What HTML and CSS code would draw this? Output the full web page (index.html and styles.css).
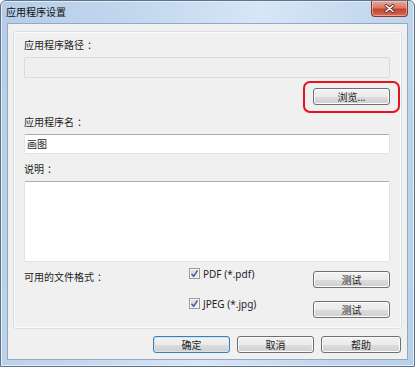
FILE: index.html
```html
<!DOCTYPE html>
<html lang="zh-CN">
<head>
    <meta charset="UTF-8">
    <meta name="viewport" content="width=device-width, initial-scale=1.0">
    <title>应用程序设置</title>
    <link rel="stylesheet" href="styles.css">
</head>
<body>
    <div class="window">
        <div class="titlebar">
            <span class="title">应用程序设置</span>
            <button class="close" type="button">
                <svg width="11" height="9" viewBox="0 0 11 9">
                    <path d="M2 1.5 L9 7.5 M9 1.5 L2 7.5" stroke="#5a2a22" stroke-width="3" stroke-linecap="round"/>
                    <path d="M2 1.5 L9 7.5 M9 1.5 L2 7.5" stroke="#ffffff" stroke-width="1.6" stroke-linecap="round"/>
                </svg>
            </button>
        </div>
        <div class="client">
            <div class="group">
                <div class="label">应用程序路径<span class="colon">：</span></div>
                <div class="path-box"></div>
                <div class="browse-row">
                    <div class="browse-wrap">
                        <button class="btn" type="button">浏览...</button>
                    </div>
                </div>
                <div class="label label-gap">应用程序名<span class="colon">：</span></div>
                <div class="textbox">画图</div>
                <div class="label label-gap2">说明<span class="colon">：</span></div>
                <div class="textarea"></div>
                <div class="formats">
                    <div class="label">可用的文件格式<span class="colon">：</span></div>
                    <label class="check"><span class="box"><svg width="9" height="9" viewBox="0 0 9 9"><path d="M1.5 4.8 L3.6 7.2 L7.6 1.4" fill="none" stroke="#3f5f9c" stroke-width="1.5"/></svg></span>PDF (*.pdf)</label>
                    <button class="btn" type="button">测试</button>
                    <div></div>
                    <label class="check"><span class="box"><svg width="9" height="9" viewBox="0 0 9 9"><path d="M1.5 4.8 L3.6 7.2 L7.6 1.4" fill="none" stroke="#3f5f9c" stroke-width="1.5"/></svg></span>JPEG (*.jpg)</label>
                    <button class="btn" type="button">测试</button>
                </div>
            </div>
            <div class="actions">
                <button class="btn btn-default" type="button">确定</button>
                <button class="btn" type="button">取消</button>
                <button class="btn btn-wide" type="button">帮助</button>
            </div>
        </div>
    </div>
</body>
</html>
```

FILE: styles.css
```css
body {
    margin: 0;
    background: #ffffff;
    font-family: "Noto Sans", "Noto Sans CJK SC", sans-serif;
    font-size: 10px;
    color: #1e1e1e;
}

.window {
    width: 415px;
    height: 367px;
    box-sizing: border-box;
    border: 1px solid #5f7389;
    border-radius: 6px 6px 0 0;
    background: linear-gradient(100deg, #b6cde7 0%, #c3d8ef 30%, #d6e6f6 55%, #c2d7ee 80%, #b9d0ea 100%);
    box-shadow: inset 0 0 0 1px #e3edf8;
}

.titlebar {
    height: 22px;
    display: flex;
    justify-content: space-between;
    padding: 0 6px 0 5px;
}

.title {
    line-height: 23px;
    color: #101010;
}

.close {
    width: 37px;
    height: 16px;
    padding: 0;
    border: 1px solid #80392d;
    border-top: none;
    border-radius: 0 0 4px 4px;
    background: linear-gradient(to bottom, #e9a99b 0%, #d77a68 45%, #c4432e 55%, #d66a52 100%);
    box-shadow: inset 0 0 0 1px rgba(255, 220, 210, 0.5);
    display: flex;
    align-items: center;
    justify-content: center;
}

.client {
    margin: 0 6px 6px 6px;
    height: 337px;
    box-sizing: border-box;
    border: 1px solid #93a8c2;
    background: #f0f0f0;
    padding: 7px 5px 0 5px;
}

.group {
    border: 1px solid #d9dfe4;
    border-radius: 3px;
    box-shadow: inset 0 0 0 1px #fbfbfb;
    padding: 6px 11px 10px 10px;
}

.label {
    line-height: 14px;
    height: 14px;
    white-space: nowrap;
}

.colon {
    padding-left: 3px;
}

.path-box {
    margin-top: 5px;
    height: 21px;
    box-sizing: border-box;
    border: 1px solid #dadada;
    border-radius: 2px;
    background: #efefef;
}

.browse-row {
    margin-top: 10px;
    display: flex;
    justify-content: flex-end;
}

.browse-wrap {
    position: relative;
}

.browse-wrap::after {
    content: "";
    position: absolute;
    top: -7px;
    bottom: -8px;
    left: -10px;
    right: -10px;
    border: 2px solid #e8121a;
    border-radius: 7px;
}

.btn {
    width: 77px;
    height: 17px;
    padding: 0;
    font-family: "Noto Sans", "Noto Sans CJK SC", sans-serif;
    font-size: 10px;
    line-height: 14px;
    color: #1e1e1e;
    border: 1px solid #707070;
    border-radius: 3px;
    background: linear-gradient(to bottom, #f2f2f2 0%, #ebebeb 50%, #dddddd 51%, #cfcfcf 100%);
    box-shadow: inset 0 0 0 1px #fcfcfc;
}

.label-gap {
    margin-top: 10px;
}

.label-gap2 {
    margin-top: 8px;
}

.textbox {
    margin-top: 5px;
    height: 20px;
    box-sizing: border-box;
    border: 1px solid #e2e3ea;
    border-top-color: #abadb3;
    border-radius: 2px;
    background: #ffffff;
    padding-left: 2px;
    line-height: 18px;
}

.textarea {
    margin-top: 5px;
    height: 81px;
    box-sizing: border-box;
    border: 1px solid #e2e3ea;
    border-top-color: #abadb3;
    border-radius: 2px;
    background: #ffffff;
}

.formats {
    margin-top: 9px;
    display: grid;
    grid-template-columns: 165px 124px 77px;
    grid-auto-rows: 17px;
    row-gap: 13px;
}

.formats .label {
    line-height: 12px;
}

.check {
    display: flex;
    align-items: center;
    gap: 3px;
    margin-top: -6px;
    height: 17px;
}

.box {
    width: 11px;
    height: 11px;
    box-sizing: border-box;
    border: 1px solid #9a9a9a;
    background: linear-gradient(135deg, #d6d6d6 0%, #f4f4f4 100%);
    box-shadow: inset 0 0 0 1px #f7f7f7;
    display: flex;
    align-items: center;
    justify-content: center;
}

.actions {
    margin-top: 7px;
    display: flex;
    justify-content: flex-end;
    gap: 7px;
    padding-right: 1px;
}

.btn-wide {
    width: 80px;
}

.btn-default {
    border-color: #3c7fb1;
    box-shadow: inset 0 0 0 1px #cbe6f7;
}
```
